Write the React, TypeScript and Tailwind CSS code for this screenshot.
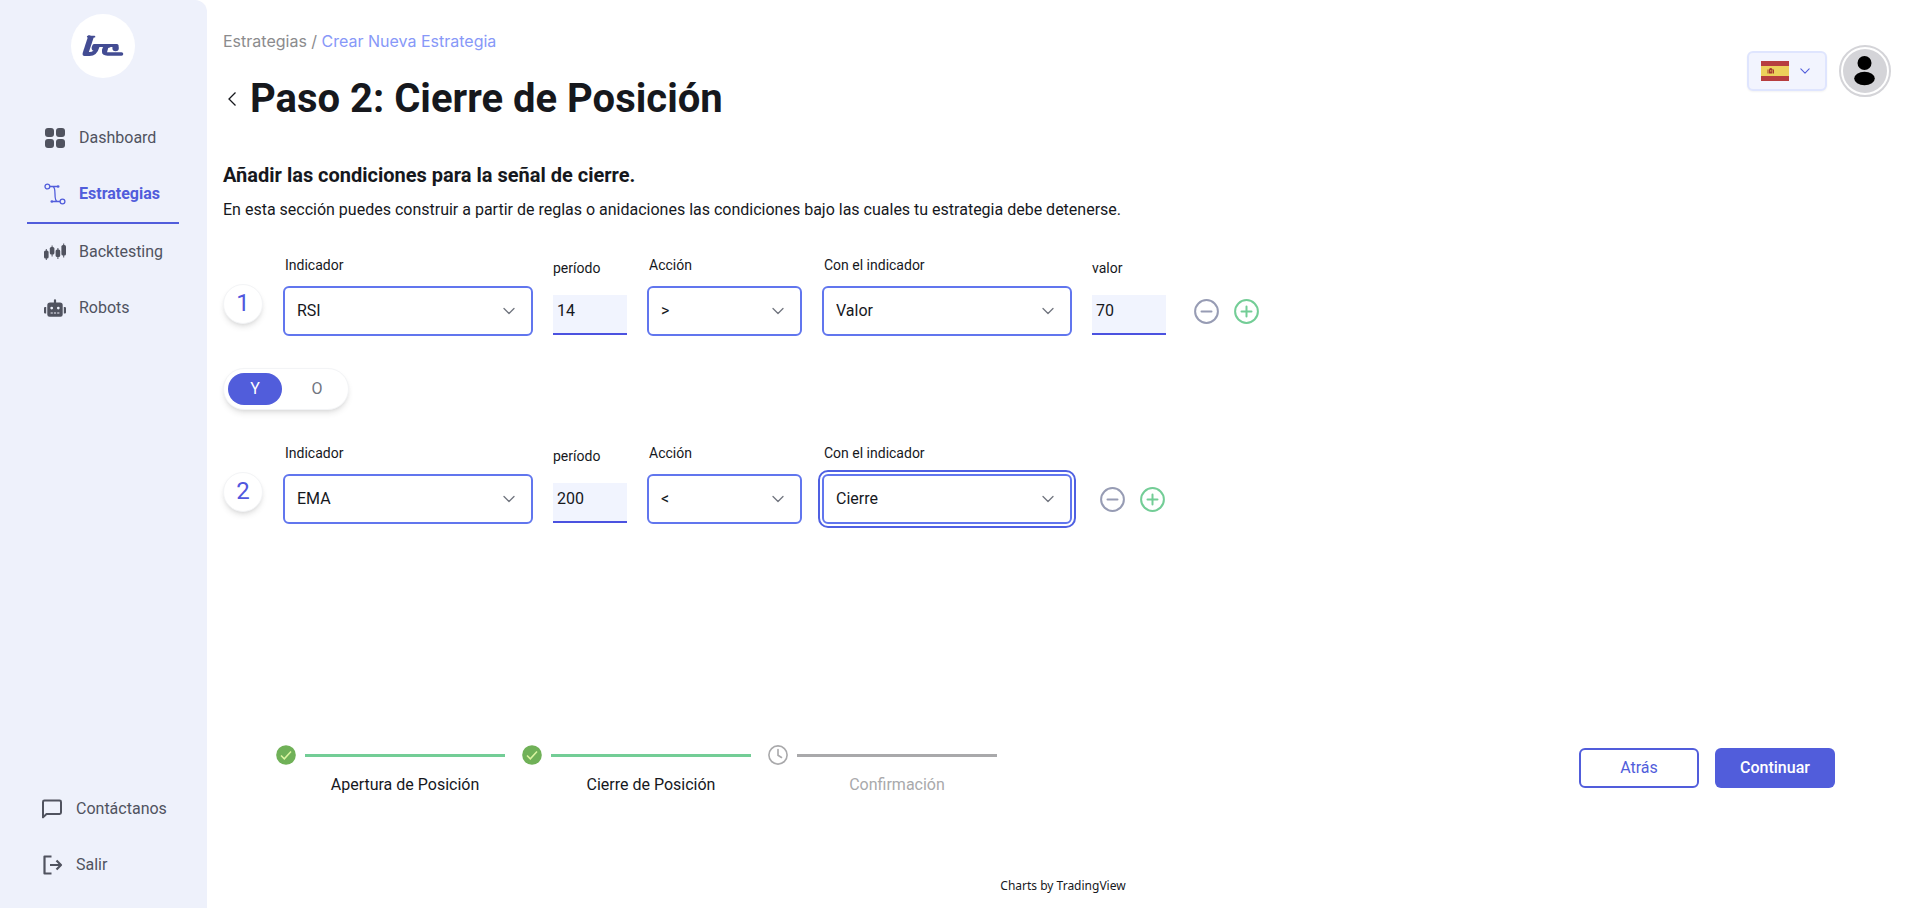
import { useId, useState } from 'react'
import type { ReactNode } from 'react'
import { FaRobot } from 'react-icons/fa'

const INDICADORES = ['RSI', 'EMA']
const ACCIONES = ['>', '<']
const COMPARADORES = ['Valor', 'Cierre']

type Rule = {
  indicador: string
  periodo: string
  accion: string
  con: string
  valor?: string
}

const initialRules: Rule[] = [
  { indicador: 'RSI', periodo: '14', accion: '>', con: 'Valor', valor: '70' },
  { indicador: 'EMA', periodo: '200', accion: '<', con: 'Cierre' },
]

/* ---------- icons ---------- */

function Logo() {
  return (
    <svg viewBox="0 0 64 64" className="size-16" role="img" aria-label="bc">
      <circle cx="32" cy="32" r="32" fill="#fff" />
      <g fill="none" stroke="#434c93" strokeLinejoin="round">
        <path d="M20.2 22 14.4 39.6" strokeWidth="5.6" />
        <path d="M16.800 22.700H23.400" strokeWidth="1.800" strokeLinecap="round" />
        <path d="M13.400 40H18.500C23.500 40 25.500 36.500 26.600 32.400" strokeWidth="3.800" strokeLinecap="round" />
        <path d="M23 31.600H46" strokeWidth="3" strokeLinecap="round" />
        <path d="M38 32C32 32.500 30.500 40 36.500 40H50.500" strokeWidth="3.600" strokeLinecap="round" />
        <path d="M35 33.500 33.600 38.500" strokeWidth="4.600" strokeLinecap="round" />
      </g>
      <circle cx="23.600" cy="34" r="3" fill="#434c93" />
      <circle cx="44.600" cy="34" r="3.200" fill="#434c93" />
    </svg>
  )
}

function DashboardIcon() {
  return (
    <svg viewBox="0 0 22 22" className="size-[22px]" fill="currentColor" aria-hidden="true">
      <rect x="1" y="1" width="9" height="9" rx="3" />
      <rect x="12" y="1" width="9" height="9" rx="3" />
      <rect x="1" y="12" width="9" height="9" rx="3" />
      <rect x="12" y="12" width="9" height="9" rx="3" />
    </svg>
  )
}

function StrategyIcon() {
  return (
    <svg viewBox="0 0 22 22" className="size-[22px]" fill="none" stroke="currentColor" strokeWidth="1.3" aria-hidden="true">
      <circle cx="3.4" cy="3.5" r="2.4" />
      <circle cx="18.5" cy="18.5" r="2.4" />
      <path d="M5.8 3.5H14M8.6 3.5C13.4 4 8.6 18 13.4 18.5M16 18.5H8" />
      <circle cx="14.2" cy="3.5" r="1.3" fill="currentColor" stroke="none" />
      <circle cx="7.8" cy="18.5" r="1.3" fill="currentColor" stroke="none" />
    </svg>
  )
}

function CandlesIcon() {
  return (
    <svg viewBox="0 0 22 22" className="size-[22px]" fill="currentColor" aria-hidden="true">
      <rect x="0" y="9.5" width="4.6" height="8" rx="1.6" />
      <rect x="1.8" y="8" width="1" height="11" />
      <rect x="5.8" y="6" width="4.6" height="7.5" rx="1.6" />
      <rect x="7.6" y="4.5" width="1" height="11" />
      <rect x="11.6" y="8.5" width="4.6" height="7.5" rx="1.6" />
      <rect x="13.4" y="7" width="1" height="11" />
      <rect x="17.4" y="4" width="4.6" height="10.5" rx="1.6" />
      <rect x="19.2" y="2.5" width="1" height="14" />
    </svg>
  )
}

function ChatIcon() {
  return (
    <svg viewBox="0 0 22 22" className="size-[22px]" fill="none" stroke="currentColor" strokeWidth="2" strokeLinejoin="round" aria-hidden="true">
      <path d="M2 4a1.4 1.4 0 0 1 1.4-1.4h15.2A1.4 1.4 0 0 1 20 4v10.6a1.4 1.4 0 0 1-1.4 1.4H5.5L2 19.4z" />
    </svg>
  )
}

function LogoutIcon() {
  return (
    <svg viewBox="0 0 22 22" className="size-[22px]" fill="none" stroke="currentColor" strokeWidth="2.2" strokeLinejoin="round" aria-hidden="true">
      <path d="M10.5 2.5H3.5V19.5H10.5" />
      <path d="M9 11H20M15.500 6.500 20 11l-4.500 4.500" />
    </svg>
  )
}

function Chevron({ className }: { className?: string }) {
  return (
    <svg viewBox="0 0 12 8" className={className} fill="none" stroke="currentColor" strokeWidth="1.3" strokeLinecap="round" strokeLinejoin="round" aria-hidden="true">
      <path d="M1 1.5 6 6.5 11 1.5" />
    </svg>
  )
}

function SpainFlag() {
  return (
    <svg viewBox="0 0 28 20" className="h-5 w-7" aria-hidden="true">
      <rect width="28" height="20" fill="#b73d3f" />
      <rect y="5" width="28" height="10" fill="#ecd05b" />
      <path d="M6.5 12.5V8.500h1v4zM12 12.500V8.500h1v4z" fill="#a5352f" />
      <path d="M8 12.600V8.300Q9.700 5.900 11.500 8.300v4.300z" fill="#a5352f" />
      <path d="M9.200 9.200h1.100v1.200H9.200z" fill="#ecd05b" />
    </svg>
  )
}

function CheckIcon() {
  return (
    <svg viewBox="0 0 20 20" className="size-5 shrink-0" aria-hidden="true">
      <circle cx="10" cy="10" r="9.8" fill="#70b158" />
      <path d="M5 10.5 8.3 13.8 15 6.5" fill="none" stroke="#dcf5a0" strokeWidth="1.5" />
    </svg>
  )
}

function ClockIcon() {
  return (
    <svg viewBox="0 0 20 20" className="size-5 shrink-0" fill="none" stroke="#a9a9ab" strokeWidth="1.6" strokeLinecap="round" aria-hidden="true">
      <circle cx="10" cy="10" r="9.1" />
      <path d="M10 4.5V10.3L13.5 12.5" />
    </svg>
  )
}

/* ---------- sidebar ---------- */

function NavItem({ icon, label, active = false }: { icon: ReactNode; label: string; active?: boolean }) {
  return (
    <a
      href="#"
      aria-current={active ? 'page' : undefined}
      className={
        active
          ? 'box-content flex h-14 items-center gap-[13px] border-b-2 border-[#515ddb] pl-[17px] font-bold text-[#515ddb]'
          : 'flex h-14 items-center gap-[13px] pl-[17px] text-[#50535f]'
      }
    >
      {icon}
      {label}
    </a>
  )
}

function Sidebar() {
  return (
    <aside className="flex w-[207px] shrink-0 flex-col rounded-tr-xl bg-[#eef1fb] pt-3.5 pr-7 pb-[15px] pl-[27px]">
      <div className="mb-8 flex justify-center">
        <Logo />
      </div>
      <nav>
        <NavItem icon={<DashboardIcon />} label="Dashboard" />
        <NavItem icon={<StrategyIcon />} label="Estrategias" active />
        <NavItem icon={<CandlesIcon />} label="Backtesting" />
        <NavItem icon={<FaRobot className="size-[22px]" />} label="Robots" />
      </nav>
      <div className="mt-auto -ml-[3px]">
        <NavItem icon={<ChatIcon />} label="Contáctanos" />
        <NavItem icon={<LogoutIcon />} label="Salir" />
      </div>
    </aside>
  )
}

/* ---------- form fields ---------- */

type SelectFieldProps = {
  label: string
  value: string
  options: string[]
  onChange: (value: string) => void
  small?: boolean
  focused?: boolean
}

function SelectField({ label, value, options, onChange, small = false, focused = false }: SelectFieldProps) {
  const id = useId()
  return (
    <div className={small ? 'w-[155px]' : 'w-[250px]'}>
      <label htmlFor={id} className="mb-[11px] block pl-0.5 text-sm leading-5">
        {label}
      </label>
      <div className="grid items-center">
        <select
          id={id}
          value={value}
          onChange={(e) => onChange(e.target.value)}
          className={`col-start-1 row-start-1 h-[50px] w-full appearance-none rounded-md border-2 border-[#6176ee] bg-white px-3 text-base outline-[#4f60e2] focus:outline-2 focus:outline-offset-2 ${
            focused ? 'outline-2 outline-offset-2' : ''
          }`}
        >
          {options.map((o) => (
            <option key={o}>{o}</option>
          ))}
        </select>
        <Chevron className="pointer-events-none col-start-1 row-start-1 mr-[18px] h-2 w-3 justify-self-end text-[#71757f]" />
      </div>
    </div>
  )
}

function NumberField({ label, value, onChange }: { label: string; value: string; onChange: (value: string) => void }) {
  const id = useId()
  return (
    <div className="w-[74px]">
      <label htmlFor={id} className="mb-3.5 block text-sm leading-[26px]">
        {label}
      </label>
      <input
        id={id}
        type="text"
        inputMode="numeric"
        value={value}
        onChange={(e) => onChange(e.target.value)}
        className="block h-10 w-full border-b-2 border-[#4b52e0] bg-[#f1f4fe] px-1 pb-2 text-base outline-none"
      />
    </div>
  )
}

function RuleRow({ index, rule, onChange }: { index: number; rule: Rule; onChange: (patch: Partial<Rule>) => void }) {
  return (
    <div className="flex items-start gap-5">
      <div className="mt-[29px] flex size-10 items-center justify-center rounded-full border border-gray-100 bg-white pb-0.5 text-2xl text-[#5157de] shadow-md">
        {index}
      </div>
      <SelectField label="Indicador" value={rule.indicador} options={INDICADORES} onChange={(indicador) => onChange({ indicador })} />
      <NumberField label="período" value={rule.periodo} onChange={(periodo) => onChange({ periodo })} />
      <SelectField small label="Acción" value={rule.accion} options={ACCIONES} onChange={(accion) => onChange({ accion })} />
      <SelectField
        label="Con el indicador"
        value={rule.con}
        options={COMPARADORES}
        onChange={(con) => onChange({ con })}
        focused={index === 2}
      />
      {rule.valor !== undefined && (
        <NumberField label="valor" value={rule.valor} onChange={(valor) => onChange({ valor })} />
      )}
      <div className="mt-11 ml-2 flex gap-[15px]">
        <button type="button" aria-label="Quitar" className="text-[#979cb4]">
          <svg viewBox="0 0 25 25" className="size-[25px]" fill="none" stroke="currentColor" strokeWidth="2" strokeLinecap="round">
            <circle cx="12.5" cy="12.5" r="11.4" />
            <path d="M7.5 12.5h10" />
          </svg>
        </button>
        <button type="button" aria-label="Añadir" className="text-[#73cd96]">
          <svg viewBox="0 0 25 25" className="size-[25px]" fill="none" stroke="currentColor" strokeWidth="2" strokeLinecap="round">
            <circle cx="12.5" cy="12.5" r="11.4" />
            <path d="M7.5 12.5h10M12.5 7.5v10" />
          </svg>
        </button>
      </div>
    </div>
  )
}

function OperatorToggle() {
  const [op, setOp] = useState('Y')
  return (
    <div className="flex w-fit gap-2 rounded-full border border-gray-100 bg-white p-1 shadow-md">
      {['Y', 'O'].map((o) => (
        <button
          key={o}
          type="button"
          aria-pressed={op === o}
          onClick={() => setOp(o)}
          className={
            op === o
              ? 'h-8 w-[54px] rounded-full bg-[#515ddb] text-white'
              : 'h-8 w-[54px] rounded-full text-[#71757f]'
          }
        >
          {o}
        </button>
      ))}
    </div>
  )
}

/* ---------- stepper ---------- */

function Step({ label, done = false }: { label: string; done?: boolean }) {
  return (
    <li className="flex gap-[9px]">
      {done ? <CheckIcon /> : <ClockIcon />}
      <div className="w-[200px]">
        <div className={done ? 'mt-[9px] h-[3px] bg-[#73cd96]' : 'mt-[9px] h-[3px] bg-[#a9a9ab]'} />
        <p className={done ? 'mt-4 text-center' : 'mt-4 text-center text-[#a9a9ab]'}>{label}</p>
      </div>
    </li>
  )
}

export default function App() {
  const [rules, setRules] = useState(initialRules)

  const updateRule = (i: number, patch: Partial<Rule>) =>
    setRules((prev) => prev.map((r, j) => (j === i ? { ...r, ...patch } : r)))

  return (
    <div className="flex min-h-screen bg-white font-[Roboto,sans-serif] text-base text-[#16181d]">
      <Sidebar />

      <div className="flex flex-1 flex-col pt-[29px] pb-3">
        <header className="flex items-start justify-between pr-7 pl-4">
          <div>
            <nav className="font-[Inter,sans-serif] leading-6 text-[#8b8b8d]">
              <a href="#">Estrategias</a> /{' '}
              <a href="#" className="text-[#8798f8]">
                Crear Nueva Estrategia
              </a>
            </nav>
            <div className="mt-[22px] flex items-center gap-[13px]">
              <button type="button" aria-label="Volver" className="pl-1">
                <svg viewBox="0 0 10 16" className="h-4 w-2.5" fill="none" stroke="currentColor" strokeWidth="1.3">
                  <path d="M8.5 1.5 2 8l6.500 6.500" />
                </svg>
              </button>
              <h1 className="text-[40px] leading-[48px] font-bold">Paso 2: Cierre de Posición</h1>
            </div>
          </div>

          <div className="mt-4 flex items-center gap-3">
            <button
              type="button"
              aria-label="Español"
              className="flex h-10 w-20 items-center justify-between rounded-md border-2 border-[#dfe5fe] bg-[#f2f4fe] pr-[15px] pl-3 shadow-xs"
            >
              <SpainFlag />
              <Chevron className="h-2 w-2.5 text-[#515ddb]" />
            </button>
            <button type="button" aria-label="Perfil" className="size-[52px] rounded-full border-2 border-[#d4d4d8] p-0.5">
              <svg viewBox="0 0 44 44" className="size-11">
                <circle cx="22" cy="22" r="22" fill="#d4d4d8" />
                <circle cx="21.5" cy="14" r="7" />
                <ellipse cx="21.5" cy="29.5" rx="10.3" ry="6.8" />
              </svg>
            </button>
          </div>
        </header>

        <main className="mt-[38px] flex flex-1 flex-col pl-4">
          <h2 className="text-xl leading-7 font-bold">Añadir las condiciones para la señal de cierre.</h2>
          <p className="mt-[9px] leading-6">
            En esta sección puedes construir a partir de reglas o anidaciones las condiciones bajo las cuales tu estrategia
            debe detenerse.
          </p>

          <div className="mt-[33px] flex flex-col gap-8">
            {rules.map((rule, i) => (
              <div key={i} className="flex flex-col gap-[33px]">
                {i > 0 && <OperatorToggle />}
                <RuleRow index={i + 1} rule={rule} onChange={(patch) => updateRule(i, patch)} />
              </div>
            ))}
          </div>

          <div className="mt-auto mb-[79px] flex items-start justify-between pr-[84px] pl-[53px]">
            <ol className="flex gap-[17px]">
              <Step label="Apertura de Posición" done />
              <Step label="Cierre de Posición" done />
              <Step label="Confirmación" />
            </ol>
            <div className="mt-[3px] flex gap-4">
              <button type="button" className="h-10 w-[120px] rounded-md border-2 border-[#515ddb] text-[#515ddb]">
                Atrás
              </button>
              <button type="button" className="h-10 w-[120px] rounded-md bg-[#515ddb] font-medium text-white">
                Continuar
              </button>
            </div>
          </div>
        </main>

        <footer className="text-center font-['Noto_Sans',sans-serif] text-xs leading-5">
          <a href="#">Charts by TradingView</a>
        </footer>
      </div>
    </div>
  )
}
